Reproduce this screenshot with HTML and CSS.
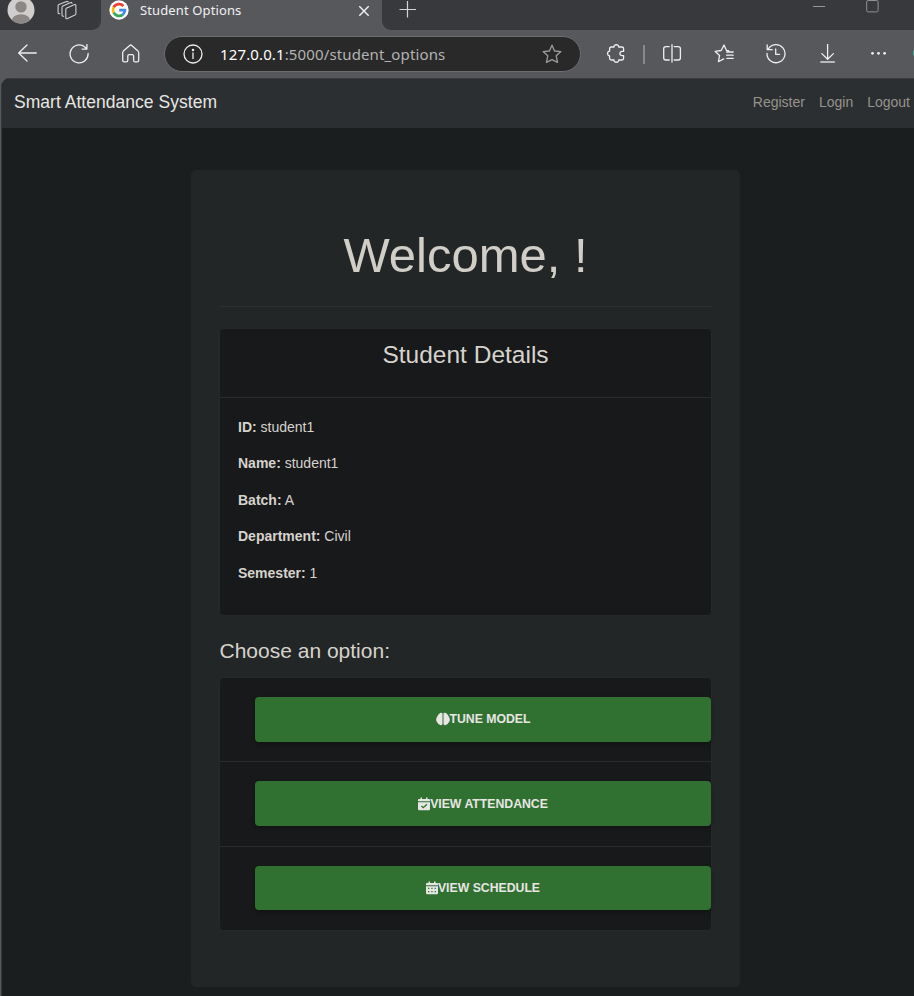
FILE: index.html
```html
<!DOCTYPE html>
<html lang="en">
<head>
<meta charset="utf-8">
<title>Student Options</title>
<link rel="stylesheet" href="styles.css">
</head>
<body>
<div class="browser">
  <div class="tabstrip">
    <div class="strip-left">
      <svg class="avatar" width="28" height="28" viewBox="0 0 28 28"><defs><clipPath id="face"><circle cx="14" cy="14" r="13.5"/></clipPath></defs><circle cx="14" cy="14" r="13.5" fill="#d0cfcd"/><g clip-path="url(#face)" fill="#8b8785"><circle cx="14" cy="10.9" r="5.7"/><ellipse cx="14" cy="24" rx="9" ry="5.8"/></g></svg>
      <svg class="workspaces" width="20" height="20" viewBox="0 0 20 20" fill="none" stroke="#cfcfd0" stroke-width="1.1" stroke-linejoin="round" stroke-linecap="round"><path d="M9.3 7.2 17.6 3.6Q18.9 3.2 18.9 4.5V12.5Q18.9 13.6 18 14.1L10.5 17.6Q8.8 18.2 8.8 16.7V8.4Q8.8 7.5 9.6 7.1Z"/><path d="M6.7 15.2Q5 15.5 5 14.1V6.4Q5 5.5 5.8 5.1L13.8 1.5Q14.8 1.2 15 2.3"/><path d="M2.8 12.7Q1.1 13 1.1 11.5V4.8Q1.1 3.9 1.9 3.5L9.6.5Q10.8.1 11.1 1"/></svg>
    </div>
    <div class="tab">
      <svg class="favicon" width="20" height="20" viewBox="0 0 20 20" fill="none" stroke-width="2.7"><circle cx="10" cy="10" r="9.7" fill="#fff" stroke="none"/><path stroke="#ea4335" d="M14.4 6A6 6 0 0 0 4.7 7.3"/><path stroke="#fbbc05" d="M4.7 7.2A6 6 0 0 0 4.7 12.8"/><path stroke="#34a853" d="M4.7 12.7A6 6 0 0 0 13.8 14.6"/><path stroke="#4285f4" d="M13.7 14.7A6 6 0 0 0 15.9 10.2H10.2"/></svg>
      <span class="tab-title">Student Options</span>
      <svg class="close" width="12" height="12" viewBox="0 0 12 12" stroke="#f1f1f1" stroke-width="1.4"><path d="M1.3 1.3 10.7 10.7M10.7 1.3 1.3 10.7"/></svg>
    </div>
    <div class="strip-right">
      <svg class="plus" width="18" height="18" viewBox="0 0 18 18" stroke="#d4d4d5" stroke-width="1.2"><path d="M.5 9.5H17M8.5 1V17.5"/></svg>
      <svg class="minimize" width="12" height="14" viewBox="0 0 12 14" stroke="#97979a"><path d="M0 6.5H12"/></svg>
      <svg class="maximize" width="13" height="14" viewBox="0 0 13 14" fill="none" stroke="#929296"><rect x=".7" y=".5" width="11.4" height="11.4" rx="1.4"/></svg>
    </div>
  </div>
  <div class="toolbar">
    <div class="nav-icons">
      <svg width="20" height="20" viewBox="0 0 20 20"><path d="M19.3 9H1.7M10 1 1.7 9 10 17"/></svg>
      <svg width="20" height="20" viewBox="0 0 20 20"><path d="M19.1 9.5A9 9 0 1 1 16.1 3.2L17.7 4.8M17.9.5V5.1H13.1"/></svg>
      <svg width="20" height="20" viewBox="0 0 20 20"><path d="M1.7 8.7Q1.7 7.8 2.4 7.1L8.7 1.4Q9.7.6 10.7 1.4L17 7.1Q17.7 7.8 17.7 8.7V16.2Q17.7 17.8 16.2 17.8H14.2Q12.6 17.8 12.6 16.2V12.1Q12.6 10.7 11.2 10.7H8.2Q6.8 10.7 6.8 12.1V16.2Q6.8 17.8 5.2 17.8H3.3Q1.7 17.8 1.7 16.2Z"/></svg>
    </div>
    <div class="address">
      <svg width="20" height="20" viewBox="0 0 20 20"><circle cx="10" cy="10" r="9"/><path d="M10 9V14.5"/><circle cx="10" cy="6" r=".6" fill="#eee"/></svg>
      <span class="url"><b>127.0.0.1</b>:5000/student_options</span>
      <svg class="star" width="20" height="20" viewBox="0 0 20 20"><path d="M10 1.2 12.6 7 18.9 7.6 14.2 11.8 15.6 18.4 10 15.6 4.4 18.4 5.8 11.8 1.1 7.6 7.4 7Z"/></svg>
    </div>
    <div class="actions">
      <svg width="20" height="20" viewBox="0 0 20 20"><path d="M5.3 3H8C7.8 0 12.9 0 12.7 3H15.9Q17.6 3 17.6 4.7V7.4H16.5C13 6.9 13 12.1 16.5 11.6H17.6V14.3Q17.6 16 15.9 16H12.7C12.9 19 7.8 19 8 16H5.3Q3.6 16 3.6 14.3V11.9C.9 11.9.9 7.1 3.6 7.1V4.7Q3.6 3 5.3 3Z"/></svg>
      <i class="divider"></i>
      <svg width="20" height="20" viewBox="0 0 20 20"><path d="M7.2 2.6H3.9Q1.7 2.6 1.7 4.8V13.8Q1.7 16 3.9 16H7.2M12.2 2.6H16.2Q18.4 2.6 18.4 4.8V13.8Q18.4 16 16.2 16H12.2M10 .7V18"/></svg>
      <svg width="20" height="20" viewBox="0 0 20 20"><path d="M14.6 6.7 12.4 6.3 10 1 7.2 6.5 1.2 7.4 5.6 11.4 4.4 17.7 9.7 14.9M12.6 8H19.2M12.6 11.2H19.2M12.9 14.4H19.2"/></svg>
      <svg width="20" height="20" viewBox="0 0 20 20"><path d="M2.2 5.2A9 9 0 1 1 1 9.5M1.2 1V5.7H6.2M9.7 5V10.4H13.4"/></svg>
      <svg width="20" height="20" viewBox="0 0 20 20"><path d="M9.6.5V14.8M3.8 9.6 9.6 15.2 15.4 9.6"/><path class="base" d="M3 18H16.2"/></svg>
      <svg width="20" height="20" viewBox="0 0 20 20"><g fill="#eee" stroke="none"><circle cx="2.5" cy="9.3" r="1.4"/><circle cx="8.5" cy="9.3" r="1.4"/><circle cx="14.6" cy="9.3" r="1.4"/></g></svg>
    </div>
    <i class="edge-badge"></i>
  </div>
  <div class="viewport">
    <nav class="navbar">
      <a class="brand">Smart Attendance System</a>
      <div class="links"><a>Register</a><a>Login</a><a>Logout</a></div>
    </nav>
    <main class="jumbotron">
      <h1>Welcome, !</h1>
      <hr>
      <section class="card">
        <header><h2>Student Details</h2></header>
        <div class="details">
          <p><b>ID:</b> student1</p>
          <p><b>Name:</b> student1</p>
          <p><b>Batch:</b> A</p>
          <p><b>Department:</b> Civil</p>
          <p><b>Semester:</b> 1</p>
        </div>
      </section>
      <h3>Choose an option:</h3>
      <ul class="options">
        <li><a class="btn"><svg width="14" height="14" viewBox="0 0 14 14"><path d="M6.5 1.3Q5.8.4 4.7.8 3.4 1 3.2 2.1 1.7 2.5 1.7 4 .4 4.8.7 6.1-.4 7.5.5 8.9.4 10.3 1.8 11 2 12.4 3.4 12.5 4.2 13.6 5.6 13.1 6.5 12.8 6.5 11.8ZM7.5 1.3Q8.2.4 9.3.8 10.6 1 10.8 2.1 12.3 2.5 12.3 4 13.6 4.8 13.3 6.1 14.4 7.5 13.5 8.9 13.6 10.3 12.2 11 12 12.4 10.6 12.5 9.8 13.6 8.4 13.1 7.5 12.8 7.5 11.8Z"/></svg>Tune Model</a></li>
        <li><a class="btn"><svg width="12" height="14" viewBox="0 0 12 14"><path fill-rule="evenodd" d="M2.5.5H4V2H8V.5H9.5V2H11Q12 2 12 3V4.3H0V3Q0 2 1 2H2.5ZM0 5.2H12V12Q12 13.3 10.7 13.3H1.3Q0 13.3 0 12ZM9.4 7.7 8.5 6.8 5.3 9.8 3.9 8.5 3 9.4 5.3 11.6Z"/></svg>View Attendance</a></li>
        <li><a class="btn"><svg width="12" height="14" viewBox="0 0 12 14"><path fill-rule="evenodd" d="M2.5.5H4V2H8V.5H9.5V2H11Q12 2 12 3V4.3H0V3Q0 2 1 2H2.5ZM0 5.2H12V12Q12 13.3 10.7 13.3H1.3Q0 13.3 0 12ZM2 6.7V8H3.3V6.7ZM5.3 6.7V8H6.6V6.7ZM8.6 6.7V8H9.9V6.7ZM2 9.9V11.2H3.3V9.9ZM5.3 9.9V11.2H6.6V9.9ZM8.6 9.9V11.2H9.9V9.9Z"/></svg>View Schedule</a></li>
      </ul>
    </main>
  </div>
</div>
</body>
</html>
```
FILE: styles.css
```css
* { box-sizing: border-box; }
body { margin: 0; background: #57585c; font-family: "Liberation Sans", Arial, sans-serif; font-size: 14px; color: #d6d3cd; }
svg { display: block; flex: none; }
h1, h2, h3, p, ul { margin: 0; padding: 0; font-weight: 400; }
.browser { width: 914px; height: 996px; overflow: hidden; display: flex; flex-direction: column; }

.tabstrip { height: 30px; flex: none; display: flex; background: #57585c; }
.strip-left { width: 101px; display: flex; background: #38393c; border-bottom-right-radius: 9px; padding-left: 7px; }
.avatar { margin-top: -4px; }
.workspaces { margin: 1px 0 0 22px; }
.tab { width: 281px; display: flex; padding-left: 8px; font-family: "Noto Sans", sans-serif; }
.favicon { margin-top: 0; }
.tab-title { margin-left: 11px; width: 218px; font-size: 13px; line-height: 20px; color: #f1f1f1; letter-spacing: .12px; }
.close { margin-top: 5px; }
.strip-right { flex: 1; display: flex; background: #38393c; border-bottom-left-radius: 9px; padding-left: 17px; }
.minimize { margin-left: 396px; }
.maximize { margin-left: 41px; }

.toolbar { height: 48px; flex: none; display: flex; align-items: center; position: relative; background: #57585c; }
.toolbar svg { fill: none; stroke: #eee; stroke-width: 1.3; stroke-linecap: round; stroke-linejoin: round; }
.toolbar .base { stroke: #b9b9bb; stroke-width: 1.8; }
.nav-icons { display: flex; gap: 32px; padding-left: 17px; width: 164px; }
.address { width: 417px; height: 36px; display: flex; align-items: center; padding: 0 18px 0 18px; background: #292929; border: 1px solid #6c6d70; border-radius: 18px; }
.url { flex: 1; margin-left: 17px; font: 15px/22px "Noto Sans", sans-serif; letter-spacing: .13px; color: #b3b3b3; }
.url b { font-weight: 400; color: #fff; }
.toolbar .star { stroke: #9c9c9c; }
.actions { display: flex; gap: 32px; align-items: center; padding-left: 25px; }
.divider { width: 2px; height: 19px; background: #87888b; margin: 0 -15px; }
.edge-badge { position: absolute; right: -11px; top: 17px; width: 12px; height: 12px; border-radius: 50%; background: #38bba5; }

.viewport { flex: 1; margin-left: 1px; background: #1b1e1f; border-top-left-radius: 9px; border-left: 1px solid #35383a; overflow: hidden; }
.navbar { height: 50px; display: flex; justify-content: space-between; align-items: center; padding: 0 4px 2px 12px; background: #2b2f31; border-top: 1px solid #3b3d40; }
.brand { font-size: 17.5px; letter-spacing: .03px; color: #e8e6e3; }
.links { display: flex; gap: 14px; padding-bottom: 2px; color: #97938c; }

.jumbotron { width: 549px; height: 817px; margin: 42px 0 0 189px; padding: 56px 28px 0; border-radius: 5px; background: #232627; }
h1 { font-size: 49px; line-height: 59px; text-align: center; color: #d1cec7; }
hr { margin: 21px 0; border: 0; border-top: 1px solid #2d3032; }
.card { height: 288px; background: #18191a; border: 1px solid #262829; border-radius: 4px; }
.card header { height: 69px; padding-top: 11px; border-bottom: 1px solid #292b2c; text-align: center; }
h2 { font-size: 24.5px; line-height: 30px; }
.details { padding: 19px 18px; }
.details p { line-height: 21px; margin-bottom: 15.4px; }
h3 { font-size: 21px; line-height: 25px; margin: 22px 0 14px .5px; }
.options { list-style: none; background: #18191a; border: 1px solid #262829; border-radius: 4px; }
.options li { height: 84.3px; padding: 19px 0 0 35px; border-bottom: 1px solid #292b2c; }
.options li:last-child { border-bottom: 0; height: 83px; }
.btn { height: 44.5px; margin-right: 0; display: flex; align-items: center; justify-content: center; border-radius: 4px; background: #307132; color: #e8e6e3; font-size: 12.25px; font-weight: 700; text-transform: uppercase; box-shadow: 0 2px 4px rgba(0,0,0,.3); }
.btn svg { fill: #e8e6e3; }
```
